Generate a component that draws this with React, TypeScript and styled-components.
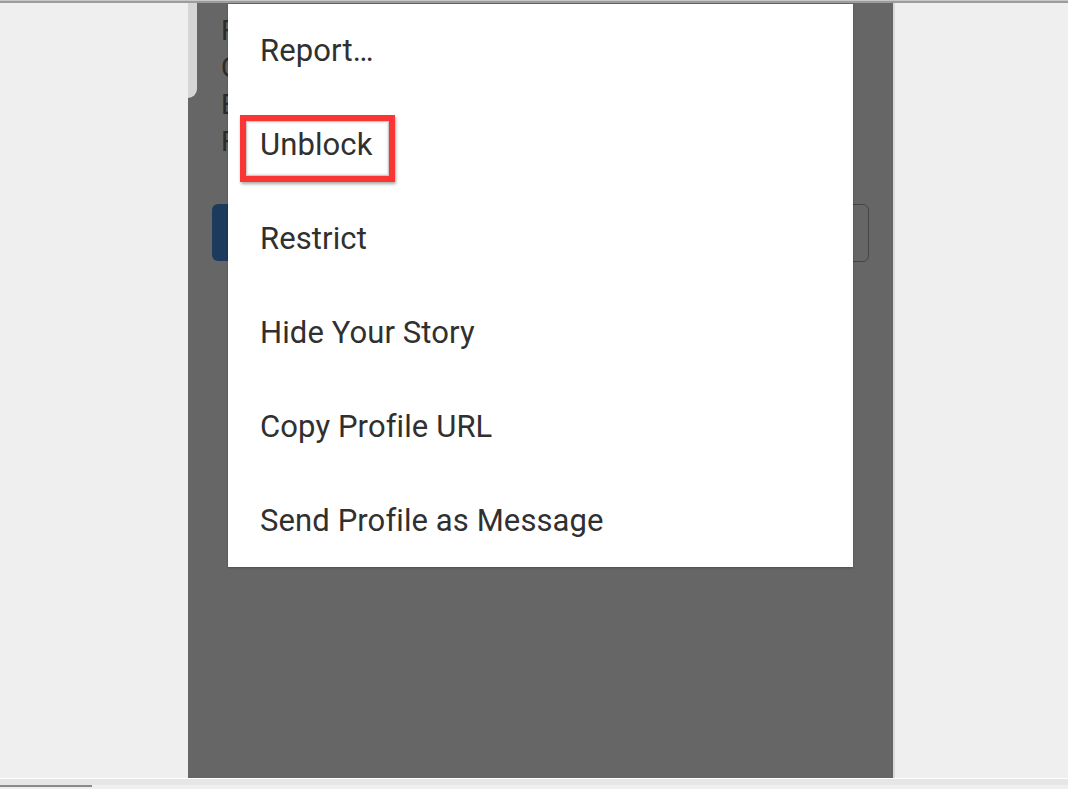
import React from "react";
import styled, { createGlobalStyle } from "styled-components";

const Global = createGlobalStyle`
  html, body { margin: 0; padding: 0; background: #efefef; overflow: hidden; }
  body { font-family: Roboto, "Liberation Sans", sans-serif; }
`;

const Page = styled.div`
  width: 1068px;
  height: 789px;
  display: flex;
  flex-direction: column;
  background: #efefef;
  border-top: 1px solid #c8c8c8;
  box-sizing: border-box;
`;

const TopRule = styled.div`
  height: 2px;
  background: #9c9c9c;
`;

const Stage = styled.div`
  display: flex;
  height: 775px;
`;

const Spacer = styled.div<{ $w: number }>`
  width: ${(p) => p.$w}px;
  flex: none;
`;

const Phone = styled.div`
  position: relative;
  width: 705px;
  flex: none;
  background: #666666;
  border-right: 2px solid #dadada;
  overflow: hidden;
`;

const Card = styled.div`
  width: 9px;
  height: 95px;
  background: #d6d6d6;
  border-bottom-right-radius: 9px;
`;

const Backdrop = styled.div`
  position: relative;
  display: flex;
  flex-direction: column;
`;

const BioLines = styled.div`
  position: absolute;
  left: 33px;
  top: 9px;
  font-size: 28px;
  line-height: 37px;
  color: #2b2b2b;
`;

const ButtonRow = styled.div`
  display: flex;
  justify-content: space-between;
  padding: 106px 24px 0 24px;
`;

const BlueButton = styled.div`
  width: 40px;
  height: 57px;
  border-radius: 6px;
  background: #1c3a5b;
`;

const OutlineButton = styled.div`
  width: 40px;
  height: 56px;
  border-radius: 6px;
  border: 1px solid #454545;
`;

const Menu = styled.div`
  position: absolute;
  left: 40px;
  top: 1px;
  width: 625px;
  height: 563px;
  background: #ffffff;
  box-shadow: 0 1px 2px rgba(0, 0, 0, 0.25);
  display: flex;
  flex-direction: column;
`;

const Item = styled.div`
  position: relative;
  height: 94px;
  flex: none;
  display: flex;
  align-items: center;
  padding-left: 32px;
  padding-bottom: 2px;
  box-sizing: border-box;
  font-size: 31px;
  color: #303030;
  letter-spacing: 0.1px;
`;

const Label = styled.span`
  position: relative;
`;

const Highlight = styled.div`
  position: absolute;
  left: 12px;
  top: 17px;
  width: 143px;
  height: 55px;
  border: 6px solid #fb3434;
  box-shadow: inset 0 0 0 1px #c9c9c9, inset 0 0 2px 2px #e6e6e6, 1px 2px 3px rgba(0, 0, 0, 0.35);
`;

const BottomBar = styled.div`
  flex: 1;
  display: flex;
  flex-direction: column;
  border-top: 1px solid #ffffff;
`;

const Track = styled.div`
  height: 6px;
  background: #e6e6e6;
`;

const Thumb = styled.div`
  width: 92px;
  height: 2px;
  background: #8a8a8a;
`;

const items = [
  "Report…",
  "Unblock",
  "Restrict",
  "Hide Your Story",
  "Copy Profile URL",
  "Send Profile as Message",
];

export default function App() {
  return (
    <Page>
      <Global />
      <TopRule />
      <Stage>
        <Spacer $w={188} />
        <Phone>
          <Backdrop>
            <Card />
            <BioLines>
              <div>F</div>
              <div>C</div>
              <div>E</div>
              <div>F</div>
            </BioLines>
            <ButtonRow>
              <BlueButton />
              <OutlineButton />
            </ButtonRow>
          </Backdrop>
          <Menu>
            {items.map((t) => (
              <Item key={t}>
                {t === "Unblock" && <Highlight />}
                <Label>{t}</Label>
              </Item>
            ))}
          </Menu>
        </Phone>
      </Stage>
      <BottomBar>
        <Track />
        <Thumb />
      </BottomBar>
    </Page>
  );
}
